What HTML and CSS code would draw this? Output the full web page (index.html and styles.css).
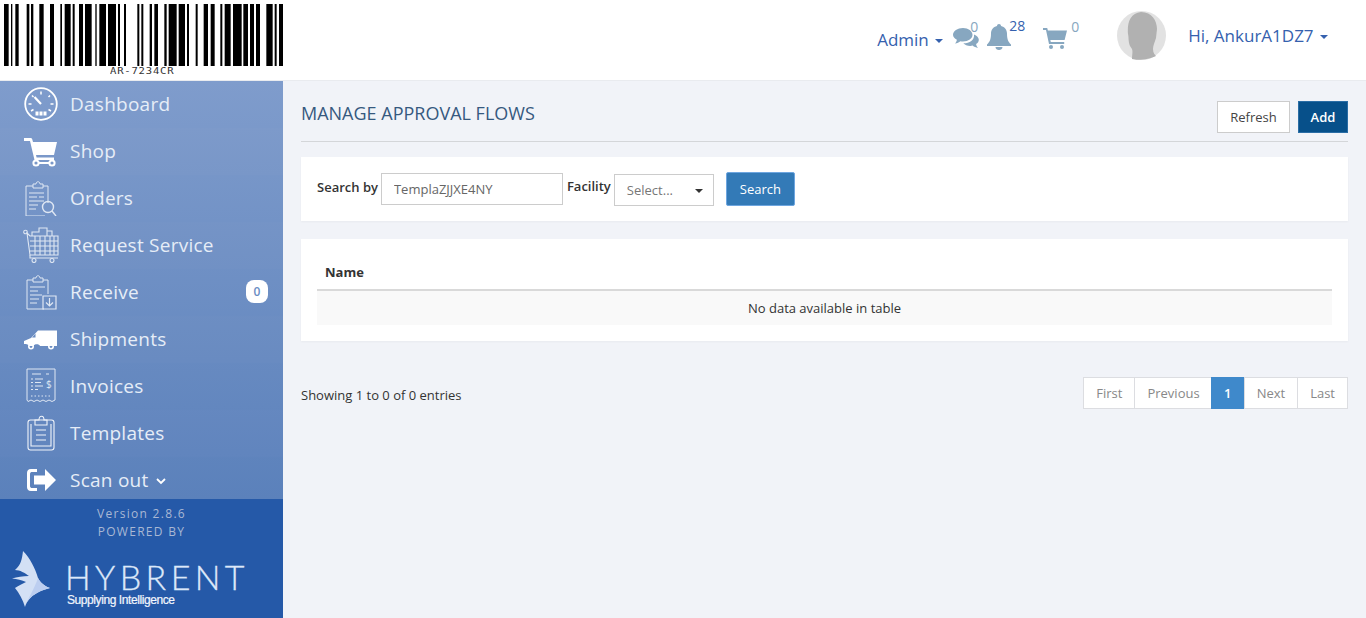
FILE: index.html
```html
<!DOCTYPE html>
<html lang="en">
<head>
  <meta charset="UTF-8">
  <title>Manage Approval Flows</title>
  <link rel="stylesheet" href="styles.css">
</head>
<body>
  <!-- top bar -->
  <header class="topbar">
    <div class="brand">
      <svg class="barcode" width="290" height="62" viewBox="0 0 870 186" fill="#000"><path d="M12 0h14v186h-14zM33 0h4v186h-4zM46 0h10v186h-10zM80 0h8v186h-8zM93 0h7v186h-7zM118 0h13v186h-13zM150 0h12v186h-12zM181 0h5v186h-5zM194 0h18v186h-18zM218 0h6v186h-6zM237 0h12v186h-12zM255 0h20v186h-20zM286 0h4v186h-4zM298 0h20v186h-20zM324 0h24v186h-24zM354 0h6v186h-6zM372 0h6v186h-6zM412 0h6v186h-6zM424 0h6v186h-6zM449 0h7v186h-7zM463 0h11v186h-11zM493 0h7v186h-7zM506 0h24v186h-24zM536 0h19v186h-19zM561 0h6v186h-6zM587 0h6v186h-6zM611 0h13v186h-13zM632 0h12v186h-12zM661 0h6v186h-6zM674 0h18v186h-18zM699 0h26v186h-26zM730 0h14v186h-14zM750 0h12v186h-12zM768 0h12v186h-12zM799 0h19v186h-19zM824 0h6v186h-6zM837 0h12v186h-12z"/></svg>
      <div class="barcode-text">AR-7234CR</div>
    </div>
    <div class="topnav">
      <a class="admin">Admin <i class="caret"></i></a>
      <span class="tool tool-chat">
        <svg width="26" height="22" viewBox="0 0 26 22" fill="#87a7c0"><path d="M10 1c5.300 0 9.500 3 9.500 6.800S15.300 14.500 10 14.500c-.9 0-1.800-.1-2.600-.3C6 15.400 4.200 16.200 2 16.400c1-1 1.700-2.200 1.900-3.700C1.500 11.500 0 9.700 0 7.800 0 4 4.500 1 10 1z"/><path d="M21 7.500c2.900 1 4.800 3 4.800 5.300 0 1.700-1 3.200-2.700 4.300.2 1.500.8 2.800 1.900 3.800-2.100-.2-4-1-5.300-2.300-.8.200-1.600.3-2.500.3-2.900 0-5.400-1-6.900-2.600 6.200.1 11.400-3.300 10.700-8.800z"/></svg>
        <sup class="count count-chat">0</sup>
      </span>
      <span class="tool tool-bell">
        <svg width="24" height="26" viewBox="0 0 24 26" fill="#87a7c0"><path d="M12 0c1.200 0 2 .8 2 2 3.800.8 6 3.800 6 7.500 0 5.500 1 8 4 11v1.500H0V20.500c3-3 4-5.500 4-11C4 5.800 6.200 2.800 10 2c0-1.200.8-2 2-2z"/><path d="M8.500 23h7c0 1.800-1.600 3-3.500 3s-3.500-1.200-3.500-3z"/></svg>
        <sup class="count count-bell">28</sup>
      </span>
      <span class="tool tool-cart">
        <svg width="24" height="21" viewBox="0 0 24 21" fill="#87a7c0"><path d="M0 0h4.200l.7 2.500H24l-2.400 9.500H7.300l.5 2h13.400v2H6L3 2H0z"/><circle cx="8" cy="19" r="2"/><circle cx="19" cy="19" r="2"/></svg>
        <sup class="count count-cart">0</sup>
      </span>
      <span class="avatar">
        <svg width="49" height="49" viewBox="0 0 49 49"><circle cx="24.500" cy="24.500" r="24.500" fill="#e2e2e2"/><path d="M15 48c0-4 1-7 0-10l-2-3c-2-5-1-8-2-12C10 12 13 2 24 1c11 0 16 9 16 17l-1 9c-1 4-3 7-3 11 0 4 2 6 3 7-6 3-18 5-24 3z" fill="#b1b1b1"/></svg>
      </span>
      <a class="user">Hi, AnkurA1DZ7 <i class="caret"></i></a>
    </div>
  </header>

  <div class="layout">
    <aside class="sidebar">
      <nav class="menu">
        <a class="menu-item">
          <svg class="ico" viewBox="0 0 36 36" fill="none" stroke="#fff" stroke-width="1.800"><circle cx="18" cy="18" r="15.800"/><path d="M18 18l-6.500-7" stroke-width="2.200"/><path d="M18 5.500v3M9 9.500l1.500 1.500M27 9.500L25.500 11M5.500 18h3M27.500 18h3M8 25l2.500-1.500M28 25l-2.500-1.500" stroke-width="1.500"/><path d="M12.500 25.500h11v4h-11z" fill="#fff" stroke="none"/><path d="M16 25v5M20 25v5" stroke="#7e9bcb" stroke-width="1"/></svg>
          <span>Dashboard</span>
        </a>
        <a class="menu-item">
          <svg class="ico" viewBox="0 0 36 36" fill="#fff"><path d="M1 5h6.500c1 0 1.500.5 1.800 1.500L10 9h24l-3 13H13l.6 2.500H31V27H11.500L7 8H1z"/><circle cx="13" cy="30" r="2.600" fill="none" stroke="#fff" stroke-width="2"/><circle cx="29" cy="30" r="2.600" fill="none" stroke="#fff" stroke-width="2"/><path d="M15 29h12v2H15z"/></svg>
          <span>Shop</span>
        </a>
        <a class="menu-item">
          <svg class="ico" viewBox="0 0 36 36" fill="none" stroke="#dfe7f3" stroke-width="1"><path d="M25 23V6h-5M10 6H3v30h19"/><path d="M10 4h3c0-3 4-3 4 0h3v4H10z"/><path d="M6 13h15M6 17h8M6 21h15M6 25h9M6 29h7M16 17h5" stroke-width="1.200"/><circle cx="25" cy="27" r="5.500" stroke-width="1.400"/><path d="M29 31l4 5" stroke-width="1.400"/></svg>
          <span>Orders</span>
        </a>
        <a class="menu-item">
          <svg class="ico" viewBox="0 0 36 36" fill="none" stroke="#dfe7f3" stroke-width="1.100"><circle cx="2.500" cy="5" r="1.800"/><path d="M4 6l3 3h28v19H7zM7 14h28M7 19h28M7 24h28M12 9v19M17 9v19M22 9v19M27 9v19M31 9v19"/><path d="M9 9V5h7V1h8v8M24 4h5v5"/><path d="M7 28v3h28"/><circle cx="11" cy="33.500" r="2"/><circle cx="29" cy="33.500" r="2"/></svg>
          <span>Request Service</span>
        </a>
        <a class="menu-item">
          <svg class="ico" viewBox="0 0 36 36" fill="none" stroke="#dfe7f3" stroke-width="1"><path d="M25 20V6h-5M10 6H4v29h17"/><path d="M10 4h3c0-3 4-3 4 0h3v4H10z"/><path d="M7 13h15M7 17h8M7 21h12M7 25h9M7 29h7" stroke-width="1.200"/><path d="M20 22h13v13H20z" stroke-width="1.200"/><path d="M26.500 24v8M23 28.500l3.500 3.500 3.500-3.500" stroke-width="1.200"/></svg>
          <span>Receive</span>
          <b class="badge">0</b>
        </a>
        <a class="menu-item">
          <svg class="ico" viewBox="0 0 36 36" fill="#fff"><path d="M15 9.500h19V25H17c-.5-2.500-6-2.500-6.500 0H6c-.5-1.500-2-2-5-2v-3l7-3z"/><path d="M12.500 12.500l-3.500 4h3.500z" fill="#6a8dc3"/><circle cx="8" cy="25.500" r="2.200" fill="none" stroke="#fff" stroke-width="1.600"/><circle cx="28" cy="25.500" r="2.200" fill="none" stroke="#fff" stroke-width="1.600"/></svg>
          <span>Shipments</span>
        </a>
        <a class="menu-item">
          <svg class="ico" viewBox="0 0 36 36" fill="none" stroke="#dfe7f3" stroke-width="1"><path d="M4 1h28v31l-3 1.500-3-1.500-3 1.500-3-1.500-3 1.500-3-1.500-3 1.500-3-1.500-3 1.500-1-1.500z"/><path d="M9 6h9M23 6h3" stroke-width="1.200"/><path d="M8 11h2M12 11h8M8 14.500h2M12 14.500h6M8 18h2M12 18h8M8 21.500h2M12 21.500h3" stroke-width="1.100"/><path d="M8 28h19" stroke-dasharray="1.500 2"/><text class="ico-dollar" x="23" y="20">$</text></svg>
          <span>Invoices</span>
        </a>
        <a class="menu-item">
          <svg class="ico" viewBox="0 0 36 36" fill="none" stroke="#f0f4fa" stroke-width="1.100"><rect x="5" y="5" width="26" height="30" rx="2.500"/><path d="M8 9v22h20V9"/><path d="M12 10V5h4c0-5 5-5 5 0h3v5z"/><path d="M13 15h10M13 20h10M13 25h10" stroke-width="1.200"/></svg>
          <span>Templates</span>
        </a>
        <a class="menu-item menu-last">
          <svg class="ico" viewBox="0 0 36 36" fill="#fff"><path d="M14 7H8c-3 0-4 2-4 4v14c0 2 1 4 4 4h6v-3H9c-1 0-2-.5-2-2V12c0-1.500 1-2 2-2h5z"/><path d="M11 13.500h11V7l11 11-11 11v-6.500H11z"/></svg>
          <span>Scan out</span>
          <svg class="chev" width="10" height="7" viewBox="0 0 10 7" fill="none" stroke="#fff" stroke-width="1.800"><path d="M1 1l4 4 4-4"/></svg>
        </a>
      </nav>
      <div class="side-foot">
        <div class="version">Version 2.8.6</div>
        <div class="powered">POWERED BY</div>
        <div class="logo">
          <svg class="logo-mark" width="40" height="58" viewBox="0 0 40 58"><path d="M12 0C11 8 10 14 4 19c5 0 10 3 14 6-6 0-12 1-17 2.500 5 .5 10 1.500 14 3.500-4 2-8 4-11 6 4 5 8 12 10 19 2-6 6-14 25-19-6-2-10-6-12-10C24 17 19 7 12 0z" fill="#d3e0f5"/><path d="M27 27c2 4 6 8 12 10-19 5-23 13-25 19 3-9 9-17 13-29z" fill="#bccef0"/></svg>
          <div class="logo-text">
            <div class="logo-name">HYBRENT</div>
            <div class="logo-sub">Supplying Intelligence</div>
          </div>
        </div>
      </div>
    </aside>

    <main class="content">
      <div class="page-head">
        <h1>Manage Approval Flows</h1>
        <div class="head-btns">
          <button class="btn btn-refresh">Refresh</button>
          <button class="btn btn-add">Add</button>
        </div>
      </div>

      <section class="card search-card">
        <label class="lbl">Search by</label>
        <input class="field" type="text" value="TemplaZJJXE4NY">
        <label class="lbl lbl-fac">Facility</label>
        <div class="select">Select... <i class="caret caret-dark"></i></div>
        <button class="btn btn-search">Search</button>
      </section>

      <section class="card table-card">
        <table>
          <thead><tr><th>Name</th></tr></thead>
          <tbody><tr><td>No data available in table</td></tr></tbody>
        </table>
      </section>

      <div class="table-foot">
        <div class="info">Showing 1 to 0 of 0 entries</div>
        <div class="pager">
          <a>First</a><a>Previous</a><a class="current">1</a><a>Next</a><a>Last</a>
        </div>
      </div>
    </main>
  </div>
</body>
</html>
```

FILE: styles.css
```css
* { box-sizing: border-box; }

html, body {
  height: 100%;
}

body {
  margin: 0;
  height: 618px;
  overflow: hidden;
  font-family: "Open Sans", sans-serif;
  font-size: 13px;
  color: #333;
  background-color: #f1f3f8;
}

/* top bar */
.topbar {
  height: 81px;
  background-color: #fff;
  border-bottom: 1px solid #e9ebef;
  display: flex;
  justify-content: space-between;
}

.brand {
  width: 283px;
  overflow: hidden;
  padding-top: 4px;
}

.barcode { display: block; }

.barcode-text {
  font-family: "DejaVu Sans Mono", monospace;
  font-size: 8px;
  line-height: 9px;
  margin-top: 1px;
  margin-left: 110px;
  letter-spacing: 0.6px;
  color: #333;
  transform: scaleX(1.32);
  transform-origin: left center;
}

.topnav {
  display: flex;
  align-items: flex-start;
  color: #3561ae;
  font-size: 17px;
  padding-right: 38px;
}

.admin { margin-top: 28px; margin-right: 10px; }
.user { margin-top: 24px; margin-left: 22px; }

.caret {
  display: inline-block;
  width: 0;
  height: 0;
  margin-left: 2px;
  vertical-align: middle;
  border-top: 4px solid #3561ae;
  border-left: 4px solid transparent;
  border-right: 4px solid transparent;
}

.caret-dark { border-top-color: #333; }

.tool {
  display: flex;
  align-items: flex-start;
}

.tool-chat { margin-top: 27px; width: 34px; }
.tool-bell { margin-top: 24px; width: 56px; }
.tool-cart { margin-top: 28px; width: 74px; }

.count {
  font-size: 14px;
  line-height: 16px;
  color: #3561ae;
}

.count-chat { color: #87a7c0; margin: -8px 0 0 -9px; }
.count-bell { margin: -6px 0 0 -2px; }
.count-cart { color: #87a7c0; margin: -9px 0 0 4px; }

.avatar { margin-top: 11px; height: 49px; }

/* sidebar */
.layout {
  display: flex;
  height: 537px;
}

.sidebar {
  width: 283px;
  flex-shrink: 0;
  display: flex;
  flex-direction: column;
}

.menu {
  height: 418px;
  background: linear-gradient(#7f9ccc, #5b81bb);
}

.menu-item {
  height: 47px;
  display: flex;
  align-items: center;
  padding-left: 23px;
  padding-bottom: 2px;
  color: #e6edf7;
  font-size: 19px;
  letter-spacing: 0.25px;
}

.menu-item:nth-child(even) { background-color: rgba(255, 255, 255, 0.015); }

.menu-last { height: 42px; padding-top: 4px; padding-bottom: 0; }

.ico {
  width: 36px;
  height: 36px;
  margin-right: 11px;
  flex-shrink: 0;
}

.ico-dollar {
  font-family: "Open Sans", sans-serif;
  font-size: 10px;
  letter-spacing: 0;
  fill: #dfe7f3;
  stroke: none;
}

.chev { margin-left: 7px; margin-top: 3px; }

.badge {
  margin-left: auto;
  margin-right: 15px;
  width: 22px;
  height: 23px;
  border-radius: 8px;
  background-color: #fff;
  color: #6a8dc3;
  font-size: 12px;
  font-weight: 600;
  letter-spacing: 0;
  text-align: center;
  line-height: 24px;
}

.side-foot {
  flex: 1;
  background-color: #2559a8;
  text-align: center;
  color: #a9b8d4;
  font-size: 12px;
  letter-spacing: 1.3px;
  padding-top: 6px;
}

.version, .powered { line-height: 18px; }

.logo {
  display: flex;
  text-align: left;
  margin-top: 10px;
  padding-left: 11px;
}

.logo-text {
  margin-left: 14px;
  color: #dde8f9;
}

.logo-name {
  font-family: "Lato", sans-serif;
  font-weight: 300;
  font-size: 34px;
  line-height: 34px;
  letter-spacing: 4.400px;
  margin-top: 9px;
  -webkit-text-stroke: 0.3px #dde8f9;
}

.logo-sub {
  font-family: "Liberation Sans", Arial, sans-serif;
  font-size: 12px;
  line-height: 12px;
  letter-spacing: -0.42px;
  color: #f2f6fd;
  margin-left: 2px;
  -webkit-text-stroke: 0.2px #f2f6fd;
}

/* page */
.content {
  flex: 1;
  padding: 20px 18px 0;
}

.page-head {
  display: flex;
  justify-content: space-between;
  height: 41px;
  border-bottom: 1px solid #d4d6d9;
}

h1 {
  margin: 0;
  font-size: 18px;
  font-weight: 400;
  line-height: 25px;
  text-transform: uppercase;
  color: #36597f;
}

.head-btns { display: flex; gap: 8px; }

.btn {
  height: 32px;
  font-family: "Open Sans", sans-serif;
  font-size: 13px;
  border-radius: 0;
  cursor: pointer;
}

.btn-refresh {
  width: 73px;
  color: #444;
  background-color: #fff;
  border: 1px solid #ccc;
}

.btn-add {
  width: 50px;
  color: #fff;
  font-weight: 600;
  background-color: #07508a;
  border: 1px solid #2a6da5;
}

.card {
  background-color: #fff;
  box-shadow: 0 1px 2px rgba(0, 0, 0, 0.04);
}

.search-card {
  margin-top: 15px;
  height: 64px;
  display: flex;
  align-items: flex-start;
  padding: 15px 16px 0;
}

.lbl {
  font-weight: 600;
  font-size: 13px;
  line-height: 30px;
  color: #333;
  margin-right: 3px;
}

.lbl-fac { margin-left: 4px; line-height: 28px; }

.field {
  width: 182px;
  height: 32px;
  margin-top: 1px;
  border: 1px solid #ccc;
  padding: 0 12px;
  font-family: "Open Sans", sans-serif;
  font-size: 13px;
  color: #666;
  outline: none;
}

.select {
  width: 100px;
  height: 32px;
  margin-top: 2px;
  border: 1px solid #ccc;
  padding-left: 12px;
  line-height: 30px;
  color: #777;
  position: relative;
}

.select .caret {
  position: absolute;
  right: 10px;
  top: 14px;
}

.btn-search {
  width: 69px;
  height: 34px;
  margin-left: 12px;
  color: #fff;
  font-weight: 500;
  background-color: #337ab7;
  border: 1px solid #6ea6e0;
  border-radius: 2px;
}

.table-card {
  margin-top: 18px;
  height: 102px;
  padding: 16px 16px 0;
}

table {
  width: 100%;
  border-collapse: collapse;
}

th {
  height: 35px;
  text-align: left;
  padding: 0 0 1px 8px;
  font-size: 13px;
  font-weight: 700;
  color: #333;
  border-bottom: 2px solid #d9d9d9;
}

td {
  height: 35px;
  text-align: center;
  font-size: 13px;
  background-color: #f9f9f9;
}

.table-foot {
  display: flex;
  justify-content: space-between;
  align-items: center;
  margin-top: 36px;
}

.info { font-size: 13px; margin-top: 4px; }

.pager { display: flex; }

.pager a {
  height: 32px;
  line-height: 30px;
  padding: 0 12px;
  font-size: 13px;
  color: #888;
  background-color: #fff;
  border: 1px solid #dcdde1;
  margin-left: -1px;
}

.pager a:nth-child(2) { padding-right: 11px; }

.pager .current {
  width: 34px;
  padding: 0;
  text-align: center;
  color: #fff;
  font-weight: 600;
  background-color: #3f89cb;
  border-color: #3f89cb;
}
```
